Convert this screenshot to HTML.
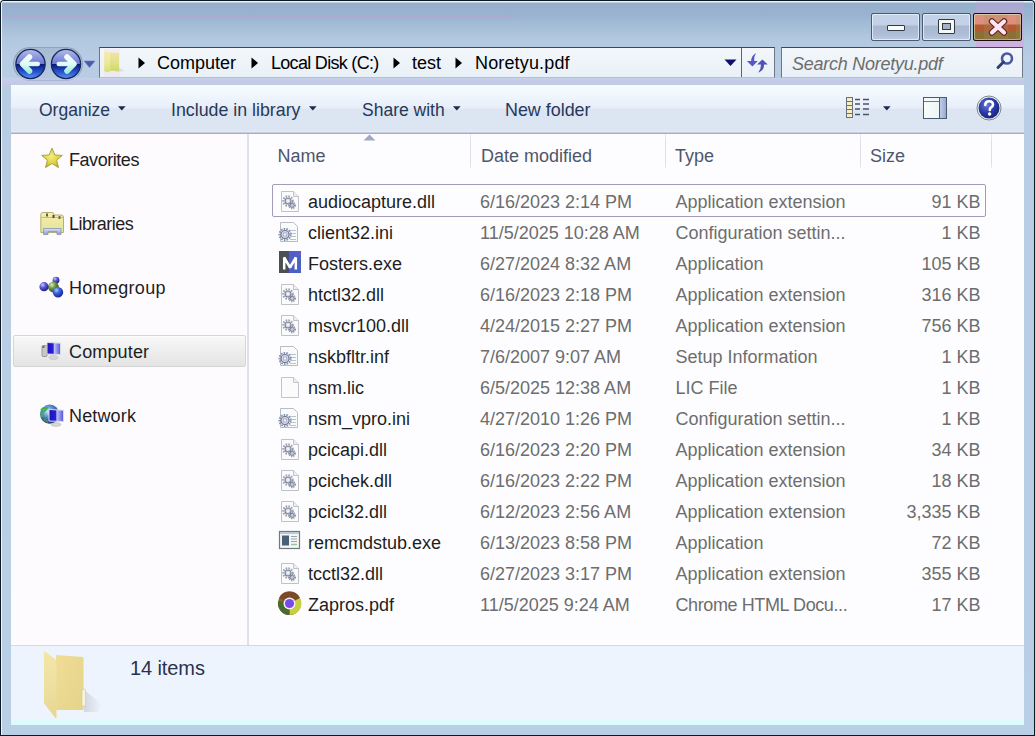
<!DOCTYPE html>
<html><head><meta charset="utf-8">
<style>
*{box-sizing:border-box;margin:0;padding:0}
html,body{width:1035px;height:736px;overflow:hidden;background:#ffffff}
body{font-family:"Liberation Sans",sans-serif;font-size:18px;position:relative}
.a{position:absolute}
.t{position:absolute;white-space:nowrap;line-height:1}
#win{left:0;top:0;width:1035px;height:736px;background:#0c1826;border-radius:4px 4px 0 0}
#frame{left:1px;top:1px;width:1033px;height:734px;border-radius:3px 3px 0 0;border-left:1px solid #f0f8ff;border-right:1px solid #c0c8f0;
 background:linear-gradient(#e6f4f6 0px,#e6f4f6 1px,#94aecc 2px,#9ab4d0 14px,#9db7d2 18px,#a9c0da 28px,#b3c9e1 40px,#b8cde4 60px,#b9cfe6 100%)}
#content{left:11px;top:85px;width:1013px;height:640px;background:#fff}
#toolbar{left:11px;top:85px;width:1013px;height:49px;
 background:linear-gradient(#f5fdfd 0px,#eef5fc 12px,#e7eef8 23px,#dde5f2 24px,#dce5f2 45px,#e6eaf8 47px,#a9aec4 48px)}
#nav{left:11px;top:134px;width:237px;height:511px;background:#fefbfe}
#navline{left:247px;top:134px;width:2px;height:511px;background:#dde2ed}
#list{left:249px;top:134px;width:775px;height:511px;background:#fdfdff}
#status{left:11px;top:645px;width:1013px;height:80px;background:#eef4fd;border-top:1px solid #d3d9e6}
.tb{color:#26395a;font-size:17.5px}
.nv{color:#1e1e1e}
.nm{color:#1e1e1e}
.gr{color:#6d6d6d}
.hd{color:#4d576c}
.cap{position:absolute;top:13px;height:28px;border:1px solid #4b5a6e;border-radius:2px;overflow:hidden}
.cap i{position:absolute;left:0;right:0;top:0;bottom:0;border:1px solid rgba(235,245,255,.75);border-radius:2px}
#addr{left:99px;top:47px;width:676px;height:31px;border:1px solid #6b7786;border-top-color:#3e4752;border-bottom-color:#b8c0cc;background:linear-gradient(#f3f7fb,#e9f0f7)}
#search{left:781px;top:47px;width:242px;height:31px;border:1px solid #6b7786;border-top-color:#3e4752;border-bottom-color:#b8c0cc;background:linear-gradient(#f3f7fb,#e9f0f7)}
.row{position:absolute;left:0;width:1035px;height:31px}
.row .n{left:308px;color:#1e1e1e}
.row .d{left:481px;color:#6d6d6d}
.row .y{left:675px;color:#6d6d6d}
.row .s{right:56px;color:#6d6d6d}
.row .t{top:0}
.ic{position:absolute;left:278px}
</style></head>
<body>
<div id="win" class="a"></div>
<div id="frame" class="a"></div>
<div class="a" style="left:2px;top:15.5px;width:512px;height:2px;background:rgba(190,160,220,.45)"></div>
<div class="a" style="left:2px;top:78px;width:1022px;height:7px;background:linear-gradient(#c6d2ea,#c4cae8 3px,#c2c8e6)"></div>
<div id="content" class="a"></div>
<div id="toolbar" class="a"></div>
<div id="nav" class="a"></div>
<div id="navline" class="a"></div>
<div id="list" class="a"></div>
<div id="status" class="a"></div>
<div class="a" style="left:11px;top:719px;width:1013px;height:6px;background:linear-gradient(#e6f8fc,#dcfcfc 2px)"></div>
<div class="cap" style="left:871px;width:49px;background:linear-gradient(#c3d2e7 0,#c5d0e8 11px,#a9b8d1 12px,#aebdd6 20px,#bccbe2 26px)"><i></i>
 <div class="a" style="left:15px;top:11px;width:17.5px;height:6.2px;background:#fbfcf4;border:1px solid #2e3a48;border-radius:1px"></div></div>
<div class="cap" style="left:922px;width:49px;background:linear-gradient(#c3d2e7 0,#c5d0e8 11px,#a9b8d1 12px,#aebdd6 20px,#bccbe2 26px)"><i></i>
 <div class="a" style="left:15px;top:5px;width:17px;height:15px;background:#f4f8f0;border:1px solid #2e3a48;border-radius:1px"><div class="a" style="left:3px;top:3px;width:9px;height:7px;background:#a8b0c8;border:1px solid #2e3a48"></div></div></div>
<div class="a" style="left:976px;top:1px;width:48px;height:47px;background:linear-gradient(rgba(225,150,225,.22),rgba(235,150,225,.5))"></div>
<div class="cap" style="left:973px;width:49px;border-color:#1a1010;border-radius:2px;background:linear-gradient(#dc927c 0,#de8e7a 10px,#b45a32 11px,#b05a30 17px,#8e6c36 18px,#8a7038 26px)"><i style="border-color:rgba(220,240,200,.55)"></i>
 <div class="a" style="left:10px;top:1px;width:24px;height:25px;background:rgba(150,150,90,.25)"></div>
 <div class="a" style="left:42px;top:1px;width:5px;height:25px;background:rgba(150,150,90,.25)"></div>
 <svg class="a" style="left:14px;top:4px" width="20" height="18" viewBox="0 0 20 18"><path d="M4 3.5 L16 14.5 M16 3.5 L4 14.5" stroke="#6a2020" stroke-width="6.4" stroke-linecap="round"/><path d="M4 3.5 L16 14.5 M16 3.5 L4 14.5" stroke="#fce6f4" stroke-width="4.2" stroke-linecap="round"/></svg></div>
<!-- nav buttons -->
<div class="a" style="left:13px;top:46.5px;width:70px;height:34px;border-radius:17px;background:linear-gradient(rgba(140,160,180,.35),rgba(170,190,210,.2));border:1.5px solid rgba(110,130,150,.5);border-bottom-color:rgba(150,170,190,.25)"></div>
<svg class="a" style="left:14px;top:48px" width="34" height="32" viewBox="0 0 34 32">
 <defs>
  <linearGradient id="gb" x1="0" y1="0" x2="0" y2="1"><stop offset="0" stop-color="#b4bcea"/><stop offset=".5" stop-color="#6a78d2"/><stop offset="1" stop-color="#4a5ac0"/></linearGradient>
  <linearGradient id="gl" x1="0" y1="0" x2="0" y2="1"><stop offset="0" stop-color="#061478"/><stop offset=".55" stop-color="#2a58d0"/><stop offset="1" stop-color="#5a98f0"/></linearGradient>
  <linearGradient id="ga" gradientUnits="userSpaceOnUse" x1="0" y1="8" x2="0" y2="24"><stop offset="0" stop-color="#f4fcff"/><stop offset=".5" stop-color="#e0fcf6"/><stop offset="1" stop-color="#a0ecd8"/></linearGradient>
 </defs>
 <circle cx="16.5" cy="16" r="14.8" fill="url(#gb)"/>
 <path d="M1.7 16 A14.8 14.8 0 0 0 31.3 16 Z" fill="url(#gl)"/>
 <circle cx="16.5" cy="16" r="14.6" fill="none" stroke="#1a2860" stroke-width="1.3"/>
 <path d="M15.5 9 L8.6 16 L15.5 23" fill="none" stroke="url(#ga)" stroke-width="5.6" stroke-linecap="round" stroke-linejoin="round"/>
 <path d="M10.5 16 H23.8" stroke="url(#ga)" stroke-width="4.4" stroke-linecap="round"/>
</svg>
<svg class="a" style="left:50px;top:48px" width="34" height="32" viewBox="0 0 34 32">
 <circle cx="16" cy="16" r="14.8" fill="url(#gb)"/>
 <path d="M1.2 16 A14.8 14.8 0 0 0 30.8 16 Z" fill="url(#gl)"/>
 <circle cx="16" cy="16" r="14.6" fill="none" stroke="#1a2860" stroke-width="1.3"/>
 <path d="M17 9 L23.9 16 L17 23" fill="none" stroke="url(#ga)" stroke-width="5.6" stroke-linecap="round" stroke-linejoin="round"/>
 <path d="M22 16 H8.7" stroke="url(#ga)" stroke-width="4.4" stroke-linecap="round"/>
</svg>
<svg class="a" style="left:83px;top:60px" width="13" height="9" viewBox="0 0 13 9"><path d="M1 1 L12 1 L6.5 7.5 Z" fill="#4a5aa8" stroke="#6a7ac0" stroke-width=".6"/></svg>
<div id="addr" class="a"></div>
<div class="a" style="left:741px;top:48px;width:1px;height:29px;background:#5a6470"></div>
<!-- folder icon in address -->
<div class="a" style="left:104px;top:49px;width:16px;height:28px;background:rgba(250,215,235,.35)"></div>
<svg class="a" style="left:103px;top:50px" width="22" height="24" viewBox="0 0 22 24">
 <defs><linearGradient id="af" x1="0" y1="0" x2="0" y2="1"><stop offset="0" stop-color="#f4eca8"/><stop offset=".55" stop-color="#eee898"/><stop offset="1" stop-color="#d4e070"/></linearGradient>
 <linearGradient id="ab" x1="0" y1="0" x2="0" y2="1"><stop offset="0" stop-color="#eee6a0"/><stop offset=".6" stop-color="#e0e088"/><stop offset="1" stop-color="#c8dc60"/></linearGradient></defs>
 <path d="M17 18 L21 21 L12 22 Z" fill="rgba(120,130,140,.18)"/>
 <path d="M6.5 2.6 L16 3 L16 20.8 L6.5 20.8 Z" fill="url(#ab)"/>
 <path d="M1.2 2 Q1.2 1.2 2 1.4 L5.8 2.2 Q6.6 2.4 6.6 3.4 L6.6 21.6 Q6.6 22.4 5.8 22.2 L2 21.4 Q1.2 21.2 1.2 20.4 Z" fill="url(#af)"/>
</svg>
<svg class="a" style="left:138px;top:57px" width="8" height="12" viewBox="0 0 8 12"><path d="M0.5 0.5 L7 6 L0.5 11.5 Z" fill="#000"/></svg>
<div class="t" style="left:157px;top:54px;color:#000">Computer</div>
<svg class="a" style="left:251px;top:57px" width="8" height="12" viewBox="0 0 8 12"><path d="M0.5 0.5 L7 6 L0.5 11.5 Z" fill="#000"/></svg>
<div class="t" style="left:271px;top:54px;color:#000;letter-spacing:-0.7px">Local Disk (C:)</div>
<svg class="a" style="left:393px;top:57px" width="8" height="12" viewBox="0 0 8 12"><path d="M0.5 0.5 L7 6 L0.5 11.5 Z" fill="#000"/></svg>
<div class="t" style="left:412px;top:54px;color:#000">test</div>
<svg class="a" style="left:455px;top:57px" width="8" height="12" viewBox="0 0 8 12"><path d="M0.5 0.5 L7 6 L0.5 11.5 Z" fill="#000"/></svg>
<div class="t" style="left:475px;top:54px;color:#000;letter-spacing:0.15px">Noretyu.pdf</div>
<svg class="a" style="left:724px;top:59px" width="13" height="8" viewBox="0 0 13 8"><path d="M0.5 0.5 L12.5 0.5 L6.5 7 Z" fill="#10106a"/></svg>
<!-- refresh -->
<svg class="a" style="left:744px;top:50px" width="26" height="26" viewBox="0 0 26 26">
 <path d="M12 3 Q7 6 7.2 11 L2.9 11 L8.4 16.4 L13.8 11 L10.2 11 Q9.8 6.5 12 3 Z" fill="#5658c4"/>
 <path d="M18.4 9.4 L23.8 14.6 L20.2 14.6 Q20.2 20.2 14.2 22.8 Q17.2 19 16.8 14.6 L13 14.6 Z" fill="#5052b8"/>
</svg>
<div id="search" class="a"></div>
<div class="t" style="left:792px;top:55px;color:#6d6d6d;font-style:italic;letter-spacing:-0.25px">Search Noretyu.pdf</div>
<svg class="a" style="left:995px;top:51px" width="20" height="20" viewBox="0 0 20 20">
 <circle cx="12" cy="7.5" r="5" fill="none" stroke="#4a5aa0" stroke-width="2.6"/>
 <path d="M8.5 11 L3 16.5" stroke="#33406e" stroke-width="3" stroke-linecap="round"/>
</svg>

<div class="t tb" style="left:39px;top:102px">Organize</div>
<svg class="a" style="left:117.5px;top:106px" width="8" height="5" viewBox="0 0 8 5"><path d="M0 0.3 L7.6 0.3 L3.8 4.6 Z" fill="#1e2a48"/></svg>
<div class="t tb" style="left:171px;top:101.8px;font-size:17.8px">Include in library</div>
<svg class="a" style="left:308.5px;top:106px" width="8" height="5" viewBox="0 0 8 5"><path d="M0 0.3 L7.6 0.3 L3.8 4.6 Z" fill="#1e2a48"/></svg>
<div class="t tb" style="left:362px;top:102px">Share with</div>
<svg class="a" style="left:452.5px;top:106px" width="8" height="5" viewBox="0 0 8 5"><path d="M0 0.3 L7.6 0.3 L3.8 4.6 Z" fill="#1e2a48"/></svg>
<div class="t tb" style="left:505px;top:101.7px;font-size:17.9px">New folder</div>
<!-- view icon -->
<svg class="a" style="left:845px;top:96px" width="26" height="23" viewBox="0 0 26 23">
 <g fill="#f4eec0" stroke="#6a7080" stroke-width="1">
  <rect x="1.5" y="1.5" width="6" height="4"/><rect x="1.5" y="5.5" width="6" height="4"/><rect x="1.5" y="9.5" width="6" height="4"/><rect x="1.5" y="13.5" width="6" height="4"/><rect x="1.5" y="17.5" width="6" height="4"/>
 </g>
 <g stroke="#4a5468" stroke-width="1.4">
  <path d="M10 3.5 H15 M18 3.5 H24 M10 8 H15 M18 8 H24 M10 13 H15 M18 13 H24 M10 18.5 H15 M18 18.5 H24"/>
 </g>
</svg>
<svg class="a" style="left:883px;top:106px" width="8" height="5" viewBox="0 0 8 5"><path d="M0 0.3 L7.6 0.3 L3.8 4.6 Z" fill="#1e2a48"/></svg>
<!-- preview pane icon -->
<div class="a" style="left:923px;top:97px;width:24px;height:22px;border:1px solid #4a5a70;background:linear-gradient(90deg,#f8fcfc,#e8f4f0)"><div class="a" style="left:0;top:3px;width:15px;height:1px;background:#6a7a90"></div><div class="a" style="left:15px;top:0;width:7px;height:20px;border-left:1px solid #4a5a70;background:linear-gradient(90deg,#c0cce8,#98a8d0)"></div></div>
<!-- help -->
<svg class="a" style="left:976px;top:95px" width="26" height="26" viewBox="0 0 26 26">
 <defs><radialGradient id="hg" cx="40%" cy="35%" r="65%"><stop offset="0" stop-color="#6a7ad8"/><stop offset=".6" stop-color="#2a3aa8"/><stop offset="1" stop-color="#1a2480"/></radialGradient></defs>
 <circle cx="13" cy="13" r="12" fill="#eef2f4" stroke="#7a8a80" stroke-width="1"/>
 <circle cx="13" cy="13" r="10.5" fill="url(#hg)"/>
 <path d="M9.3 10 Q9.3 6.2 13.2 6.2 Q17 6.2 17 9.6 Q17 11.6 14.8 12.7 Q13.8 13.3 13.8 15" fill="none" stroke="#fff" stroke-width="2.6" stroke-linecap="round"/>
 <circle cx="13.6" cy="19" r="1.7" fill="#fff"/>
</svg>

<div class="a" style="left:13px;top:335px;width:233px;height:32px;border:1px solid #d6d6d6;border-radius:2px;background:linear-gradient(#f8f8f8,#ececec 60%,#e4e4e4);box-shadow:inset 0 1px 0 #fdfdfd"></div>
<div class="t nv" style="left:69px;top:151px;letter-spacing:-0.45px">Favorites</div>
<div class="t nv" style="left:69px;top:215px;letter-spacing:-0.55px">Libraries</div>
<div class="t nv" style="left:69px;top:279px;letter-spacing:0.3px">Homegroup</div>
<div class="t nv" style="left:69px;top:343px;letter-spacing:0.15px">Computer</div>
<div class="t nv" style="left:69px;top:407px;letter-spacing:0.15px">Network</div>
<!-- star -->
<svg class="a" style="left:40px;top:147px" width="24" height="23" viewBox="0 0 24 23">
 <defs><radialGradient id="sg" cx="45%" cy="40%" r="60%"><stop offset="0" stop-color="#f4f07a"/><stop offset=".7" stop-color="#d8d040"/><stop offset="1" stop-color="#b8a830"/></radialGradient></defs>
 <path d="M12 1.2 L14.9 8 L22.3 8.4 L16.6 13.2 L18.5 20.6 L12 16.5 L5.5 20.6 L7.4 13.2 L1.7 8.4 L9.1 8 Z" fill="url(#sg)" stroke="#b0a040" stroke-width="1" stroke-linejoin="round"/>
</svg>
<!-- libraries -->
<svg class="a" style="left:39px;top:211px" width="26" height="25" viewBox="0 0 26 25">
 <defs><linearGradient id="lbg" x1="0" y1="0" x2="0" y2="1"><stop offset="0" stop-color="#f6eeb8"/><stop offset=".5" stop-color="#eee8a0"/><stop offset="1" stop-color="#d8e8a0"/></linearGradient>
 <linearGradient id="lbb" x1="0" y1="0" x2="0" y2="1"><stop offset="0" stop-color="#d8e4f4"/><stop offset="1" stop-color="#9098d0"/></linearGradient></defs>
 <path d="M1.8 3.5 Q2 1.5 4 1.5 L14 1.5 L15 4 L22 4 Q24.5 4 24.5 6 L24.5 21.5 L1.8 21.5 Z" fill="url(#lbg)" stroke="#b8b070" stroke-width="1"/>
 <path d="M2 6.5 H24" stroke="#c8c080" stroke-width="1"/>
 <rect x="7" y="2.5" width="2" height="3" fill="#5a6a30"/><rect x="13.5" y="4" width="2" height="3" fill="#5a4a20"/><rect x="19.5" y="5" width="2" height="3" fill="#7a6a40"/>
 <path d="M4.5 17.5 L22 17.5 L22 23.5 L18 23.5 L18 20.5 L9 20.5 L9 23.5 L4.5 23.5 Z" fill="url(#lbb)" stroke="#8a90b8" stroke-width=".8"/>
</svg>
<!-- homegroup -->
<svg class="a" style="left:36px;top:272px" width="28" height="26" viewBox="0 0 28 26">
 <defs>
  <radialGradient id="hb" cx="35%" cy="30%" r="70%"><stop offset="0" stop-color="#c8c8ff"/><stop offset=".45" stop-color="#5a5ad8"/><stop offset="1" stop-color="#20208a"/></radialGradient>
  <radialGradient id="hb2" cx="35%" cy="30%" r="70%"><stop offset="0" stop-color="#a8c8ff"/><stop offset=".45" stop-color="#3a60e0"/><stop offset="1" stop-color="#1a2a90"/></radialGradient>
  <radialGradient id="hgr" cx="35%" cy="30%" r="70%"><stop offset="0" stop-color="#d8f0b0"/><stop offset=".5" stop-color="#6a9040"/><stop offset="1" stop-color="#2a5a20"/></radialGradient>
 </defs>
 <circle cx="20" cy="8.2" r="3.4" fill="url(#hb)"/>
 <circle cx="17.4" cy="15" r="5.4" fill="url(#hgr)"/>
 <circle cx="8" cy="14.7" r="4.6" fill="url(#hb)"/>
 <circle cx="22" cy="20.2" r="5.2" fill="url(#hb2)"/>
</svg>
<!-- computer -->
<svg class="a" style="left:40px;top:340px" width="24" height="22" viewBox="0 0 24 22">
 <defs><linearGradient id="scr" x1="0" y1="0" x2="1" y2="0"><stop offset="0" stop-color="#1a10c0"/><stop offset=".45" stop-color="#2a20d0"/><stop offset=".55" stop-color="#b8c0f8"/><stop offset="1" stop-color="#5a50d8"/></linearGradient></defs>
 <rect x="2" y="5.5" width="5" height="11" rx="1" fill="#c8c8c8" stroke="#8a8a8a" stroke-width=".8"/>
 <rect x="2.5" y="6" width="2" height="2" fill="#6a6a6a"/>
 <path d="M7 2.5 L20.5 3.2 L20.5 14.5 L7 14 Z" fill="url(#scr)" stroke="#d8dce8" stroke-width="1"/>
 <ellipse cx="13.5" cy="17.5" rx="4.5" ry="1.8" fill="#d8d8d8" stroke="#b0b0b0" stroke-width=".6"/>
</svg>
<!-- network -->
<svg class="a" style="left:38px;top:402px" width="28" height="28" viewBox="0 0 28 28">
 <defs><radialGradient id="ng" cx="40%" cy="35%" r="65%"><stop offset="0" stop-color="#d0e8f8"/><stop offset=".5" stop-color="#4a88c8"/><stop offset="1" stop-color="#1a3a70"/></radialGradient>
 <linearGradient id="scr2" x1="0" y1="0" x2="1" y2="0"><stop offset="0" stop-color="#1a10c0"/><stop offset=".45" stop-color="#2a20d0"/><stop offset=".55" stop-color="#b8c0f8"/><stop offset="1" stop-color="#5a50d8"/></linearGradient></defs>
 <circle cx="11.7" cy="12.2" r="9.6" fill="url(#ng)"/>
 <path d="M3 8 Q6 5 9 6 Q7 9 5 10 Q3 12 4 15" stroke="#40b050" stroke-width="2.2" fill="none"/>
 <path d="M6 17 Q8 19 10 20" stroke="#5a8a40" stroke-width="2" fill="none"/>
 <path d="M11 7.5 L25.5 8.2 L25.5 19.5 L11 19 Z" fill="url(#scr2)" stroke="#d8dce8" stroke-width="1"/>
 <ellipse cx="18" cy="22.5" rx="5" ry="1.8" fill="#d8d8d8" stroke="#b0b0b0" stroke-width=".6"/>
</svg>
<!--LISTSTART-->
<div class="t hd" style="left:277.5px;top:147.3px">Name</div>
<div class="t hd" style="left:481px;top:147.3px">Date modified</div>
<div class="t hd" style="left:675px;top:147.3px">Type</div>
<div class="t hd" style="left:870px;top:147.3px">Size</div>
<div class="a" style="left:470px;top:134px;width:1px;height:34px;background:linear-gradient(#e8eaf0,#dcdfe6 30%,#dcdfe6 85%,#eceef2)"></div>
<div class="a" style="left:665px;top:134px;width:1px;height:34px;background:linear-gradient(#e8eaf0,#dcdfe6 30%,#dcdfe6 85%,#eceef2)"></div>
<div class="a" style="left:860px;top:134px;width:1px;height:34px;background:linear-gradient(#e8eaf0,#dcdfe6 30%,#dcdfe6 85%,#eceef2)"></div>
<div class="a" style="left:991px;top:134px;width:1px;height:34px;background:linear-gradient(#e8eaf0,#dcdfe6 30%,#dcdfe6 85%,#eceef2)"></div>
<svg class="a" style="left:363px;top:134px" width="13" height="7" viewBox="0 0 13 7"><path d="M0.5 6.5 L6.5 0.5 L12.5 6.5 Z" fill="#a0aac4"/></svg>
<div class="a" style="left:272px;top:184px;width:714px;height:33px;border:1px solid #a29cba;border-radius:2px;background:#fdfdff"></div>
<svg class="ic" style="left:279px;top:190px" width="22" height="23" viewBox="0 0 22 23"><path d="M2.5 1.5 L14.5 1.5 L19.5 6.5 L19.5 21.5 L2.5 21.5 Z" fill="#fbfbfb" stroke="#c0c2c8" stroke-width="1"/><path d="M14.5 1.5 L14.5 6.5 L19.5 6.5" fill="#eceef0" stroke="#c0c2c8" stroke-width="1"/><g transform="translate(9,11)"><circle r="4.8" fill="none" stroke="#9aa2b4" stroke-width="2" stroke-dasharray="1.6 1.2"/><circle r="3" fill="#d4d8e4" stroke="#7a8298" stroke-width="1.1"/><circle r="1.2" fill="#f4f4f8"/></g><g transform="translate(13.2,15.4)"><circle r="3" fill="none" stroke="#8a8ea8" stroke-width="1.6" stroke-dasharray="1.2 1"/><circle r="2" fill="#c8cad8" stroke="#707690" stroke-width=".9"/></g></svg>
<div class="t nm" style="left:308px;top:193px">audiocapture.dll</div>
<div class="t gr" style="left:480px;top:193px">6/16/2023 2:14 PM</div>
<div class="t gr" style="left:675.5px;top:193px">Application extension</div>
<div class="t gr" style="right:54.5px;top:193px">91 KB</div>
<svg class="ic" style="left:278px;top:221px" width="22" height="23" viewBox="0 0 22 23"><path d="M2.5 1.5 L15.5 1.5 L19.5 5.5 L19.5 20.5 L2.5 20.5 Z" fill="#fafcfc" stroke="#b8bcc4" stroke-width="1"/><g stroke="#b8c4cc" stroke-width="1"><path d="M12 9.5 H18 M12 12.5 H18 M12 15.5 H18 M12 18.5 H18"/></g><g transform="translate(7,13.5)"><circle r="5.6" fill="none" stroke="#8a94b0" stroke-width="2" stroke-dasharray="1.6 1.1"/><circle r="4" fill="#d8dcec" stroke="#6a7490" stroke-width="1.1"/><rect x="-1.8" y="-1.5" width="3.6" height="3" fill="#f4f4fa" stroke="#8a90a8" stroke-width=".6"/></g></svg>
<div class="t nm" style="left:308px;top:224px">client32.ini</div>
<div class="t gr" style="left:480px;top:224px">11/5/2025 10:28 AM</div>
<div class="t gr" style="left:675.5px;top:224px">Configuration settin...</div>
<div class="t gr" style="right:54.5px;top:224px">1 KB</div>
<svg class="ic" style="left:279px;top:251px" width="22" height="22" viewBox="0 0 22 22"><rect x="0" y="0" width="9" height="22" fill="#4a5052"/><rect x="9" y="0" width="13" height="22" fill="#4a62c4"/><rect x="8" y="0" width="2" height="22" fill="#4a4880"/><rect x="15" y="0" width="7" height="5" fill="#5a5ec8"/><path d="M5.2 18.5 L5.2 6.5 L11 16.5 L16.8 6.5 L16.8 18.5" fill="none" stroke="#ffffff" stroke-width="2.5" stroke-linejoin="miter" stroke-miterlimit="1.5"/></svg>
<div class="t nm" style="left:308px;top:255px">Fosters.exe</div>
<div class="t gr" style="left:480px;top:255px">6/27/2024 8:32 AM</div>
<div class="t gr" style="left:675.5px;top:255px">Application</div>
<div class="t gr" style="right:54.5px;top:255px">105 KB</div>
<svg class="ic" style="left:279px;top:283px" width="22" height="23" viewBox="0 0 22 23"><path d="M2.5 1.5 L14.5 1.5 L19.5 6.5 L19.5 21.5 L2.5 21.5 Z" fill="#fbfbfb" stroke="#c0c2c8" stroke-width="1"/><path d="M14.5 1.5 L14.5 6.5 L19.5 6.5" fill="#eceef0" stroke="#c0c2c8" stroke-width="1"/><g transform="translate(9,11)"><circle r="4.8" fill="none" stroke="#9aa2b4" stroke-width="2" stroke-dasharray="1.6 1.2"/><circle r="3" fill="#d4d8e4" stroke="#7a8298" stroke-width="1.1"/><circle r="1.2" fill="#f4f4f8"/></g><g transform="translate(13.2,15.4)"><circle r="3" fill="none" stroke="#8a8ea8" stroke-width="1.6" stroke-dasharray="1.2 1"/><circle r="2" fill="#c8cad8" stroke="#707690" stroke-width=".9"/></g></svg>
<div class="t nm" style="left:308px;top:286px">htctl32.dll</div>
<div class="t gr" style="left:480px;top:286px">6/16/2023 2:18 PM</div>
<div class="t gr" style="left:675.5px;top:286px">Application extension</div>
<div class="t gr" style="right:54.5px;top:286px">316 KB</div>
<svg class="ic" style="left:279px;top:314px" width="22" height="23" viewBox="0 0 22 23"><path d="M2.5 1.5 L14.5 1.5 L19.5 6.5 L19.5 21.5 L2.5 21.5 Z" fill="#fbfbfb" stroke="#c0c2c8" stroke-width="1"/><path d="M14.5 1.5 L14.5 6.5 L19.5 6.5" fill="#eceef0" stroke="#c0c2c8" stroke-width="1"/><g transform="translate(9,11)"><circle r="4.8" fill="none" stroke="#9aa2b4" stroke-width="2" stroke-dasharray="1.6 1.2"/><circle r="3" fill="#d4d8e4" stroke="#7a8298" stroke-width="1.1"/><circle r="1.2" fill="#f4f4f8"/></g><g transform="translate(13.2,15.4)"><circle r="3" fill="none" stroke="#8a8ea8" stroke-width="1.6" stroke-dasharray="1.2 1"/><circle r="2" fill="#c8cad8" stroke="#707690" stroke-width=".9"/></g></svg>
<div class="t nm" style="left:308px;top:317px">msvcr100.dll</div>
<div class="t gr" style="left:480px;top:317px">4/24/2015 2:27 PM</div>
<div class="t gr" style="left:675.5px;top:317px">Application extension</div>
<div class="t gr" style="right:54.5px;top:317px">756 KB</div>
<svg class="ic" style="left:278px;top:345px" width="22" height="23" viewBox="0 0 22 23"><path d="M2.5 1.5 L15.5 1.5 L19.5 5.5 L19.5 20.5 L2.5 20.5 Z" fill="#fafcfc" stroke="#b8bcc4" stroke-width="1"/><g stroke="#b8c4cc" stroke-width="1"><path d="M12 9.5 H18 M12 12.5 H18 M12 15.5 H18 M12 18.5 H18"/></g><g transform="translate(7,13.5)"><circle r="5.6" fill="none" stroke="#8a94b0" stroke-width="2" stroke-dasharray="1.6 1.1"/><circle r="4" fill="#d8dcec" stroke="#6a7490" stroke-width="1.1"/><rect x="-1.8" y="-1.5" width="3.6" height="3" fill="#f4f4fa" stroke="#8a90a8" stroke-width=".6"/></g></svg>
<div class="t nm" style="left:308px;top:348px">nskbfltr.inf</div>
<div class="t gr" style="left:480px;top:348px">7/6/2007 9:07 AM</div>
<div class="t gr" style="left:675.5px;top:348px">Setup Information</div>
<div class="t gr" style="right:54.5px;top:348px">1 KB</div>
<svg class="ic" style="left:279px;top:376px" width="22" height="23" viewBox="0 0 22 23"><path d="M2.5 1.5 L14.5 1.5 L19.5 6.5 L19.5 21.5 L2.5 21.5 Z" fill="#fbfbfb" stroke="#c0c4cc" stroke-width="1"/><path d="M14.5 1.5 L14.5 6.5 L19.5 6.5" fill="#eceef0" stroke="#c0c4cc" stroke-width="1"/></svg>
<div class="t nm" style="left:308px;top:379px">nsm.lic</div>
<div class="t gr" style="left:480px;top:379px">6/5/2025 12:38 AM</div>
<div class="t gr" style="left:675.5px;top:379px">LIC File</div>
<div class="t gr" style="right:54.5px;top:379px">1 KB</div>
<svg class="ic" style="left:278px;top:407px" width="22" height="23" viewBox="0 0 22 23"><path d="M2.5 1.5 L15.5 1.5 L19.5 5.5 L19.5 20.5 L2.5 20.5 Z" fill="#fafcfc" stroke="#b8bcc4" stroke-width="1"/><g stroke="#b8c4cc" stroke-width="1"><path d="M12 9.5 H18 M12 12.5 H18 M12 15.5 H18 M12 18.5 H18"/></g><g transform="translate(7,13.5)"><circle r="5.6" fill="none" stroke="#8a94b0" stroke-width="2" stroke-dasharray="1.6 1.1"/><circle r="4" fill="#d8dcec" stroke="#6a7490" stroke-width="1.1"/><rect x="-1.8" y="-1.5" width="3.6" height="3" fill="#f4f4fa" stroke="#8a90a8" stroke-width=".6"/></g></svg>
<div class="t nm" style="left:308px;top:410px">nsm_vpro.ini</div>
<div class="t gr" style="left:480px;top:410px">4/27/2010 1:26 PM</div>
<div class="t gr" style="left:675.5px;top:410px">Configuration settin...</div>
<div class="t gr" style="right:54.5px;top:410px">1 KB</div>
<svg class="ic" style="left:279px;top:438px" width="22" height="23" viewBox="0 0 22 23"><path d="M2.5 1.5 L14.5 1.5 L19.5 6.5 L19.5 21.5 L2.5 21.5 Z" fill="#fbfbfb" stroke="#c0c2c8" stroke-width="1"/><path d="M14.5 1.5 L14.5 6.5 L19.5 6.5" fill="#eceef0" stroke="#c0c2c8" stroke-width="1"/><g transform="translate(9,11)"><circle r="4.8" fill="none" stroke="#9aa2b4" stroke-width="2" stroke-dasharray="1.6 1.2"/><circle r="3" fill="#d4d8e4" stroke="#7a8298" stroke-width="1.1"/><circle r="1.2" fill="#f4f4f8"/></g><g transform="translate(13.2,15.4)"><circle r="3" fill="none" stroke="#8a8ea8" stroke-width="1.6" stroke-dasharray="1.2 1"/><circle r="2" fill="#c8cad8" stroke="#707690" stroke-width=".9"/></g></svg>
<div class="t nm" style="left:308px;top:441px">pcicapi.dll</div>
<div class="t gr" style="left:480px;top:441px">6/16/2023 2:20 PM</div>
<div class="t gr" style="left:675.5px;top:441px">Application extension</div>
<div class="t gr" style="right:54.5px;top:441px">34 KB</div>
<svg class="ic" style="left:279px;top:469px" width="22" height="23" viewBox="0 0 22 23"><path d="M2.5 1.5 L14.5 1.5 L19.5 6.5 L19.5 21.5 L2.5 21.5 Z" fill="#fbfbfb" stroke="#c0c2c8" stroke-width="1"/><path d="M14.5 1.5 L14.5 6.5 L19.5 6.5" fill="#eceef0" stroke="#c0c2c8" stroke-width="1"/><g transform="translate(9,11)"><circle r="4.8" fill="none" stroke="#9aa2b4" stroke-width="2" stroke-dasharray="1.6 1.2"/><circle r="3" fill="#d4d8e4" stroke="#7a8298" stroke-width="1.1"/><circle r="1.2" fill="#f4f4f8"/></g><g transform="translate(13.2,15.4)"><circle r="3" fill="none" stroke="#8a8ea8" stroke-width="1.6" stroke-dasharray="1.2 1"/><circle r="2" fill="#c8cad8" stroke="#707690" stroke-width=".9"/></g></svg>
<div class="t nm" style="left:308px;top:472px">pcichek.dll</div>
<div class="t gr" style="left:480px;top:472px">6/16/2023 2:22 PM</div>
<div class="t gr" style="left:675.5px;top:472px">Application extension</div>
<div class="t gr" style="right:54.5px;top:472px">18 KB</div>
<svg class="ic" style="left:279px;top:500px" width="22" height="23" viewBox="0 0 22 23"><path d="M2.5 1.5 L14.5 1.5 L19.5 6.5 L19.5 21.5 L2.5 21.5 Z" fill="#fbfbfb" stroke="#c0c2c8" stroke-width="1"/><path d="M14.5 1.5 L14.5 6.5 L19.5 6.5" fill="#eceef0" stroke="#c0c2c8" stroke-width="1"/><g transform="translate(9,11)"><circle r="4.8" fill="none" stroke="#9aa2b4" stroke-width="2" stroke-dasharray="1.6 1.2"/><circle r="3" fill="#d4d8e4" stroke="#7a8298" stroke-width="1.1"/><circle r="1.2" fill="#f4f4f8"/></g><g transform="translate(13.2,15.4)"><circle r="3" fill="none" stroke="#8a8ea8" stroke-width="1.6" stroke-dasharray="1.2 1"/><circle r="2" fill="#c8cad8" stroke="#707690" stroke-width=".9"/></g></svg>
<div class="t nm" style="left:308px;top:503px">pcicl32.dll</div>
<div class="t gr" style="left:480px;top:503px">6/12/2023 2:56 AM</div>
<div class="t gr" style="left:675.5px;top:503px">Application extension</div>
<div class="t gr" style="right:54.5px;top:503px">3,335 KB</div>
<svg class="ic" style="left:278px;top:529px" width="23" height="22" viewBox="0 0 23 22"><rect x="1.5" y="2.5" width="20" height="17" fill="#f4f6f4" stroke="#707880" stroke-width="1.2"/><rect x="2" y="3" width="19" height="2" fill="#b8c8d8"/><rect x="4" y="6.5" width="7" height="10" fill="#4a6078"/><path d="M13 7.5 H19 M13 10 H19 M13 12.5 H19" stroke="#9aa4b0" stroke-width="1"/><path d="M13 15.5 H19" stroke="#90c8a0" stroke-width="1.5"/></svg>
<div class="t nm" style="left:308px;top:534px">remcmdstub.exe</div>
<div class="t gr" style="left:480px;top:534px">6/13/2023 8:58 PM</div>
<div class="t gr" style="left:675.5px;top:534px">Application</div>
<div class="t gr" style="right:54.5px;top:534px">72 KB</div>
<svg class="ic" style="left:279px;top:562px" width="22" height="23" viewBox="0 0 22 23"><path d="M2.5 1.5 L14.5 1.5 L19.5 6.5 L19.5 21.5 L2.5 21.5 Z" fill="#fbfbfb" stroke="#c0c2c8" stroke-width="1"/><path d="M14.5 1.5 L14.5 6.5 L19.5 6.5" fill="#eceef0" stroke="#c0c2c8" stroke-width="1"/><g transform="translate(9,11)"><circle r="4.8" fill="none" stroke="#9aa2b4" stroke-width="2" stroke-dasharray="1.6 1.2"/><circle r="3" fill="#d4d8e4" stroke="#7a8298" stroke-width="1.1"/><circle r="1.2" fill="#f4f4f8"/></g><g transform="translate(13.2,15.4)"><circle r="3" fill="none" stroke="#8a8ea8" stroke-width="1.6" stroke-dasharray="1.2 1"/><circle r="2" fill="#c8cad8" stroke="#707690" stroke-width=".9"/></g></svg>
<div class="t nm" style="left:308px;top:565px">tcctl32.dll</div>
<div class="t gr" style="left:480px;top:565px">6/27/2023 3:17 PM</div>
<div class="t gr" style="left:675.5px;top:565px">Application extension</div>
<div class="t gr" style="right:54.5px;top:565px">355 KB</div>
<svg class="ic" style="left:277px;top:591px" width="25" height="25" viewBox="0 0 25 25"><circle cx="12.5" cy="12.5" r="11.5" fill="#7a6a30"/><path d="M12.5 12.5 L2 7 A11.5 11.5 0 0 1 23 7 Z" fill="#7a4a28"/><path d="M12.5 12.5 L23 7 A11.5 11.5 0 0 1 12.5 24 Z" fill="#c8d040"/><path d="M12.5 12.5 L12.5 24 A11.5 11.5 0 0 1 1.2 10 Z" fill="#4a6a30"/><circle cx="12.5" cy="12.5" r="6" fill="#f4f0f4"/><circle cx="12.5" cy="12.5" r="4.6" fill="#7a4ae8"/></svg>
<div class="t nm" style="left:308px;top:596px">Zapros.pdf</div>
<div class="t gr" style="left:480px;top:596px">11/5/2025 9:24 AM</div>
<div class="t gr" style="left:675.5px;top:596px;letter-spacing:-0.4px">Chrome HTML Docu...</div>
<div class="t gr" style="right:54.5px;top:596px">17 KB</div>
<!--LISTEND-->
<!--STATUSSTART-->
<svg class="a" style="left:40px;top:648px" width="70" height="74" viewBox="0 0 70 74">
 <defs><linearGradient id="fg1" x1="0" y1="0" x2="1" y2="1"><stop offset="0" stop-color="#f0dc98"/><stop offset="1" stop-color="#e4d488"/></linearGradient>
 <linearGradient id="fg2" x1="0" y1="0" x2="0" y2="1"><stop offset="0" stop-color="#f4e6a8"/><stop offset=".5" stop-color="#eee0a0"/><stop offset="1" stop-color="#e6d890"/></linearGradient>
 <linearGradient id="fsh" x1="0" y1="0" x2="1" y2="0"><stop offset="0" stop-color="rgba(100,100,110,.35)"/><stop offset="1" stop-color="rgba(100,100,110,0)"/></linearGradient></defs>
 <path d="M44 42 L62 56 L58 64 L44 64 Z" fill="url(#fsh)" opacity=".6"/>
 <path d="M16 7 L43.5 9 L43.5 62 L16 62 Z" fill="url(#fg1)"/>
 <path d="M42 42 L45.5 41 L45.5 58 L42 58 Z" fill="#f8f4dc" stroke="#c8c0a0" stroke-width=".5"/>
 <path d="M4 4 Q4 3 5 3.5 L15 11 Q16.5 12 16.5 14 L16.5 69 Q16.5 70.5 15 69.5 L5 56.5 Q4 55.5 4 54 Z" fill="url(#fg2)"/>
</svg>
<div class="t" style="left:130px;top:658px;color:#28324e;font-size:20px;letter-spacing:-0.1px">14 items</div>
<!--STATUSEND-->
</body></html>
